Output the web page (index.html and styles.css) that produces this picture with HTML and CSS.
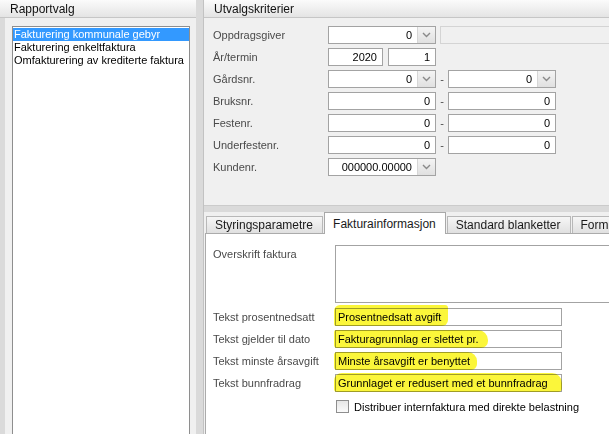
FILE: index.html
```html
<!DOCTYPE html>
<html lang="no">

<head>
	<meta charset="UTF-8">
	<meta name="viewport" content="width=device-width, initial-scale=1.0">
	<title>Fakturering</title>
	<link rel="stylesheet" href="styles.css">
</head>

<body>
	<div class="app">

		<!-- Report list -->
		<aside class="report-panel">
			<div class="panel-head">Rapportvalg</div>
			<div class="report-body">
				<ul class="report-list">
					<li class="selected">Fakturering kommunale gebyr</li>
					<li>Fakturering enkeltfaktura</li>
					<li>Omfakturering av krediterte faktura</li>
				</ul>
			</div>
		</aside>

		<main class="main">
			<!-- Selection criteria -->
			<section class="criteria">
				<div class="panel-head">Utvalgskriterier</div>
				<div class="criteria-form">
					<div class="field-row">
						<span class="field-label">Oppdragsgiver</span>
						<div class="combo"><span class="value">0</span><span class="drop"><svg width="9" height="6" viewBox="0 0 9 6"><polyline points="1,1 4.5,4.5 8,1" /></svg></span></div>
						<div class="disabled-field"></div>
					</div>
					<div class="field-row">
						<span class="field-label">År/termin</span>
						<div class="input year">2020</div>
						<div class="input term">1</div>
					</div>
					<div class="field-row">
						<span class="field-label">Gårdsnr.</span>
						<div class="combo"><span class="value">0</span><span class="drop"><svg width="9" height="6" viewBox="0 0 9 6"><polyline points="1,1 4.5,4.5 8,1" /></svg></span></div>
						<span class="dash">-</span>
						<div class="combo"><span class="value">0</span><span class="drop"><svg width="9" height="6" viewBox="0 0 9 6"><polyline points="1,1 4.5,4.5 8,1" /></svg></span></div>
					</div>
					<div class="field-row">
						<span class="field-label">Bruksnr.</span>
						<div class="input">0</div>
						<span class="dash">-</span>
						<div class="input">0</div>
					</div>
					<div class="field-row">
						<span class="field-label">Festenr.</span>
						<div class="input">0</div>
						<span class="dash">-</span>
						<div class="input">0</div>
					</div>
					<div class="field-row">
						<span class="field-label">Underfestenr.</span>
						<div class="input">0</div>
						<span class="dash">-</span>
						<div class="input">0</div>
					</div>
					<div class="field-row">
						<span class="field-label">Kundenr.</span>
						<div class="combo"><span class="value">000000.00000</span><span class="drop"><svg width="9" height="6" viewBox="0 0 9 6"><polyline points="1,1 4.5,4.5 8,1" /></svg></span></div>
					</div>
				</div>
			</section>

			<!-- Tabs -->
			<section class="tabs-area">
				<div class="tab-strip">
					<div class="tab">Styringsparametre</div>
					<div class="tab active">Fakturainformasjon</div>
					<div class="tab">Standard blanketter</div>
					<div class="tab last">Form</div>
				</div>
				<div class="tab-page">
					<div class="info-row memo-row">
						<span class="info-label">Overskrift faktura</span>
						<div class="memo"></div>
					</div>
					<div class="info-row">
						<span class="info-label">Tekst prosentnedsatt</span>
						<div class="text-field"><mark class="marker m1">Prosentnedsatt avgift</mark></div>
					</div>
					<div class="info-row">
						<span class="info-label">Tekst gjelder til dato</span>
						<div class="text-field"><mark class="marker m2">Fakturagrunnlag er slettet pr.</mark></div>
					</div>
					<div class="info-row">
						<span class="info-label">Tekst minste årsavgift</span>
						<div class="text-field"><mark class="marker m3">Minste årsavgift er benyttet</mark></div>
					</div>
					<div class="info-row">
						<span class="info-label">Tekst bunnfradrag</span>
						<div class="text-field"><mark class="marker m4">Grunnlaget er redusert med et bunnfradrag</mark></div>
					</div>
					<label class="check-row"><span class="checkbox"></span>Distribuer internfaktura med direkte belastning</label>
				</div>
			</section>
		</main>
	</div>
</body>

</html>
```

FILE: styles.css
```css
body {
	margin: 0;
	font-family: "Liberation Sans", Arial, sans-serif;
	font-size: 11px;
	color: #000;
	background-color: #dadada;
	width: 609px;
	height: 434px;
	overflow: hidden;
}

.app {
	display: flex;
	height: 434px;
}

/* Panel headers */
.panel-head {
	height: 17px;
	line-height: 18px;
	border-bottom: 1px solid #c6c6c6;
	background: linear-gradient(#fbfbfb, #e4e4e4);
	font-size: 12px;
	padding-left: 10px;
	color: #111;
}

/* Report list */
.report-panel {
	width: 196px;
	flex: none;
	display: flex;
	flex-direction: column;
}

.report-body {
	flex: 1;
	display: flex;
	margin-left: 5px;
	background-color: #f0f0f0;
	padding: 8px 6px 0 7px;
}

.report-list {
	list-style: none;
	flex: 1;
	margin: 0 0 -2px 0;
	padding: 1px 0;
	background: #fff;
	border: 1px solid #8e8e8e;
}

.report-list li {
	height: 13px;
	line-height: 13px;
	padding-left: 1px;
	white-space: nowrap;
}

.report-list li.selected {
	background-color: #3399ff;
	color: #fff;
}

/* Right side */
.main {
	flex: 1;
	min-width: 0;
	margin-left: 7px;
	display: flex;
	flex-direction: column;
	border-left: 1px solid #c2c2c2;
}

.criteria {
	height: 206px;
	box-sizing: border-box;
	background-color: #f0f0f0;
	border-bottom: 1px solid #cbcbcb;
}

.criteria-form {
	display: flex;
	flex-direction: column;
	gap: 4px;
	padding: 8px 0 0 9px;
}

.field-row {
	display: flex;
	align-items: center;
	height: 18px;
}

.field-label {
	width: 115px;
	flex: none;
	color: #4a4a4a;
}

.input,
.combo {
	width: 108px;
	height: 18px;
	box-sizing: border-box;
	border: 1px solid #a3a3a3;
	background: #fff;
	line-height: 16px;
	flex: none;
}

.input {
	text-align: right;
	padding-right: 5px;
}

.input.year {
	width: 55px;
	margin-right: 5px;
}

.input.term {
	width: 48px;
}

.combo {
	display: flex;
}

.combo .value {
	flex: 1;
	text-align: right;
	padding-right: 5px;
}

.combo .drop {
	width: 17px;
	display: flex;
	align-items: center;
	justify-content: center;
	background: linear-gradient(#f4f4f4, #e0e0e0);
	border-left: 1px solid #d6d6d6;
}

.combo .drop polyline {
	fill: none;
	stroke: #8a8a8a;
	stroke-width: 1.4;
}

.dash {
	width: 12px;
	text-align: center;
	color: #4a4a4a;
	flex: none;
}

.disabled-field {
	width: 200px;
	height: 18px;
	margin-left: 4px;
	box-sizing: border-box;
	border: 1px solid #d4d4d4;
	background: #f0f0f0;
	flex: none;
}

/* Tab control */
.tabs-area {
	flex: 1;
	display: flex;
	flex-direction: column;
	margin-top: 6px;
	padding-left: 1px;
	background-color: #f0f0f0;
}

.tab-strip {
	display: flex;
	align-items: flex-end;
	height: 21px;
	padding-left: 1px;
}

.tab {
	flex: none;
	height: 17px;
	line-height: 16px;
	box-sizing: border-box;
	padding: 0 9px 0 8px;
	margin-right: 1px;
	font-size: 12px;
	color: #1a1a1a;
	border: 1px solid #b8b8b8;
	border-bottom: none;
	background: linear-gradient(#f6f6f6, #e0e0e0);
	white-space: nowrap;
}

.tab.active {
	height: 22px;
	line-height: 22px;
	margin-bottom: -1px;
	background: #fff;
	border-color: #a9a9a9;
	position: relative;
	z-index: 1;
}

.tab.last {
	width: 60px;
	border-right: none;
}

.tab-page {
	flex: 1;
	background: #fff;
	border-top: 1px solid #ababab;
	border-left: 1px solid #ababab;
	padding: 11px 0 0 7px;
}

.info-row {
	display: flex;
	align-items: center;
	height: 18px;
	margin-bottom: 4px;
}

.info-row.memo-row {
	align-items: flex-start;
	height: 58px;
	margin-bottom: 5px;
}

.memo-row .info-label {
	padding-top: 3px;
}

.info-label {
	width: 122px;
	flex: none;
	color: #4a4a4a;
	white-space: nowrap;
}

.memo {
	width: 290px;
	height: 58px;
	flex: none;
	box-sizing: border-box;
	border: 1px solid #a3a3a3;
}

.text-field {
	width: 227px;
	height: 18px;
	flex: none;
	box-sizing: border-box;
	border: 1px solid #a3a3a3;
	line-height: 16px;
	padding-left: 2px;
	white-space: nowrap;
}

/* Yellow marker strokes over the text fields */
.marker {
	color: #000;
	background: #fbf63a;
	mix-blend-mode: multiply;
	padding: 3px 7px 3px 4px;
	margin: 0 -7px 0 -4px;
	border-radius: 3px 9px 6px 3px;
}

.marker.m1 {
	padding-top: 6px;
	border-radius: 6px 3px 6px 2px;
}

.marker.m2 {
	padding-right: 9px;
	border-radius: 2px 10px 7px 3px;
}

.marker.m4 {
	padding-right: 14px;
	padding-top: 4px;
	border-radius: 8px 10px 4px 3px;
}

.check-row {
	display: flex;
	align-items: center;
	margin: 8px 0 0 123px;
	white-space: nowrap;
}

.checkbox {
	width: 13px;
	height: 13px;
	box-sizing: border-box;
	border: 1px solid #8e8e8e;
	background: linear-gradient(#e6e6e6, #fafafa);
	margin-right: 5px;
}
```
